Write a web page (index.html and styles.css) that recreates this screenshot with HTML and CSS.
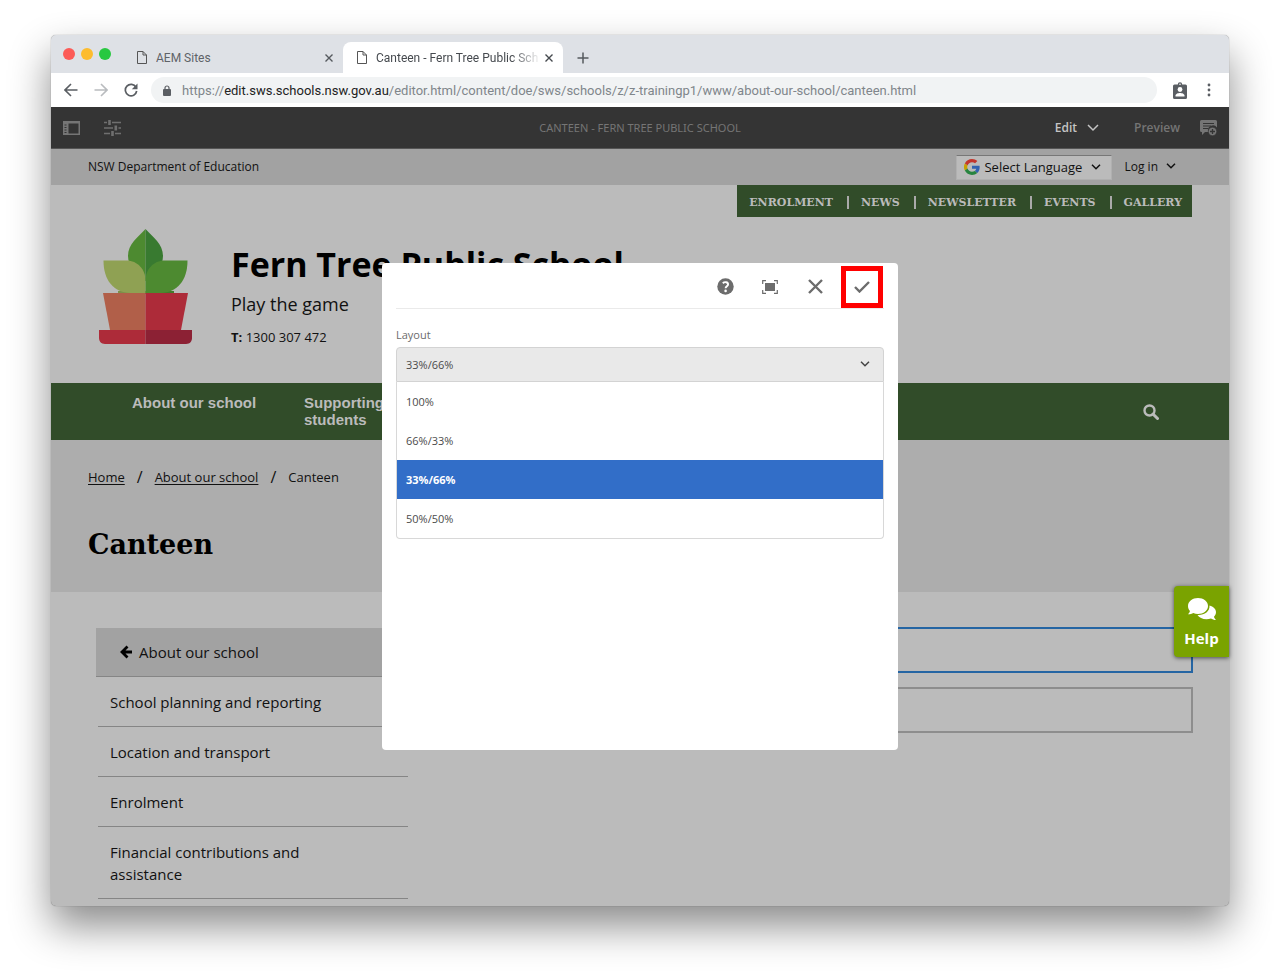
FILE: index.html
```html
<!DOCTYPE html>
<html lang="en">
<head>
<meta charset="utf-8">
<title>Canteen - Fern Tree Public School</title>
<link rel="stylesheet" href="styles.css">
</head>
<body>
<div class="window">
  <header class="tabs">
    <div class="lights"><span class="light red"></span><span class="light amber"></span><span class="light green"></span></div>
    <div class="tab">
      <svg class="doc" viewBox="0 0 10 13" width="10" height="13"><path d="M.5.5H6L9.5 4v8.500H.5zM6 .5V4h3.500" fill="none" stroke="#555" stroke-width="1"/></svg>
      <span class="tab-title">AEM Sites</span>
      <button class="plain" aria-label="Close AEM Sites"><svg viewBox="0 0 8 8" width="8" height="8"><path d="M.5.5l7 7m0-7l-7 7" stroke="#55595e" stroke-width="1.400"/></svg></button>
    </div>
    <div class="tab active">
      <svg class="doc" viewBox="0 0 10 13" width="10" height="13"><path d="M.5.5H6L9.5 4v8.500H.5zM6 .5V4h3.500" fill="none" stroke="#555" stroke-width="1"/></svg>
      <span class="tab-title">Canteen - Fern Tree Public Sch</span>
      <button class="plain" aria-label="Close Canteen"><svg viewBox="0 0 8 8" width="8" height="8"><path d="M.5.5l7 7m0-7l-7 7" stroke="#45494e" stroke-width="1.400"/></svg></button>
    </div>
    <button class="plain new-tab" aria-label="New tab"><svg viewBox="0 0 12 12" width="12" height="12"><path d="M6 .5v11M.5 6h11" stroke="#55595e" stroke-width="1.500"/></svg></button>
  </header>

  <div class="toolbar">
    <button class="plain" aria-label="Back"><svg viewBox="0 0 14 14" width="14" height="14"><path d="M13.500 7H1.500M7 1L1 7l6 6" fill="none" stroke="#5a5e63" stroke-width="1.600"/></svg></button>
    <button class="plain" aria-label="Forward"><svg viewBox="0 0 14 14" width="14" height="14"><path d="M.5 7h12M7 1l6 6-6 6" fill="none" stroke="#b9bcbf" stroke-width="1.600"/></svg></button>
    <button class="plain" aria-label="Reload"><svg viewBox="0 0 14 14" width="14" height="14"><path d="M12 4.200A5.700 5.700 0 1 0 12.700 8" fill="none" stroke="#5a5e63" stroke-width="1.700"/><path d="M13.500.5v5.700H7.800z" fill="#5a5e63"/></svg></button>
    <div class="address">
      <svg viewBox="0 0 8 11" width="8" height="11"><rect y="4" width="8" height="7" rx="1" fill="#5a5e63"/><path d="M2 4.500V3a2 2 0 0 1 4 0v1.500" fill="none" stroke="#5a5e63" stroke-width="1.200"/></svg>
      <span class="url">https://<b>edit.sws.schools.nsw.gov.au</b>/editor.html/content/doe/sws/schools/z/z-trainingp1/www/about-our-school/canteen.html</span>
    </div>
    <button class="plain" aria-label="Profile"><svg viewBox="0 0 14 17" width="14" height="17"><path d="M1.500 2.500h3.300a2.200 2.200 0 0 1 4.400 0h3.300A1.500 1.500 0 0 1 14 4v11.500a1.500 1.500 0 0 1-1.500 1.500h-11A1.500 1.500 0 0 1 0 15.500V4a1.500 1.500 0 0 1 1.500-1.500z" fill="#5a5e63"/><circle cx="7" cy="2.300" r=".8" fill="#fff"/><circle cx="7" cy="7.500" r="2.400" fill="#fff"/><path d="M2.500 14.500v-1c0-1.700 2.800-2.500 4.500-2.500s4.500.8 4.500 2.500v1z" fill="#fff"/></svg></button>
    <button class="plain more" aria-label="Menu"><svg viewBox="0 0 4 14" width="4" height="14"><g fill="#5a5e63"><circle cx="2" cy="2" r="1.400"/><circle cx="2" cy="7" r="1.400"/><circle cx="2" cy="12" r="1.400"/></g></svg></button>
  </div>

  <div class="editor">
    <div class="editor-left">
      <button class="plain" aria-label="Toggle side panel"><svg viewBox="0 0 17 14" width="17" height="14"><path fill-rule="evenodd" d="M0 0h17v14H0zM5.500 2.500v10h10v-10z" fill="#757575"/><path d="M1.500 4h2M1.500 6.500h2M1.500 9h2M1.500 11.500h2" stroke="#343434" stroke-width="1.200"/></svg></button>
      <button class="plain" aria-label="Page information"><svg viewBox="0 0 17 16" width="17" height="16"><path d="M0 2.500h3M8 2.500h9M0 8h9M14.500 8H17M0 13.500h6M11 13.500h6" stroke="#6f6f6f" stroke-width="1.600" fill="none"/><path d="M5.500 0v5M11.800 5.500v5M8.500 11v5" stroke="#6f6f6f" stroke-width="2.600"/></svg></button>
    </div>
    <span class="editor-title">CANTEEN - FERN TREE PUBLIC SCHOOL</span>
    <div class="editor-right">
      <button class="plain mode">Edit <svg viewBox="0 0 12 8" width="12" height="8"><path d="M1 1l5 5 5-5" fill="none" stroke="#c4c4c4" stroke-width="1.500"/></svg></button>
      <button class="plain preview">Preview</button>
      <button class="plain" aria-label="Annotate"><svg viewBox="0 0 17 16" width="17" height="16"><path d="M1.500 0h14A1.500 1.500 0 0 1 17 1.500v6A5 5 0 0 0 8.200 12H5l-3 3v-3h-.5A1.500 1.500 0 0 1 0 10.500v-9A1.500 1.500 0 0 1 1.500 0z" fill="#757575"/><path d="M3 3.500h11M3 6h8M3 8.500h5" stroke="#343434" stroke-width="1.100"/><circle cx="12.500" cy="11.500" r="4.200" fill="#757575" stroke="#343434" stroke-width=".6"/><path d="M12.500 9v5M10 11.500h5" stroke="#343434" stroke-width="1.300"/></svg></button>
    </div>
  </div>

  <main class="site">
    <div class="department">
      <a href="#">NSW Department of Education</a>
      <div class="account">
        <button class="language">
          <svg viewBox="0 0 48 48" width="16" height="16"><path fill="#c3352b" d="M24 9.500c3.500 0 6.700 1.200 9.200 3.600l6.900-6.900C35.900 2.400 30.500 0 24 0 14.600 0 6.500 5.400 2.600 13.200l8 6.200C12.400 13.700 17.700 9.500 24 9.500z"/><path fill="#3262b0" d="M47 24.500c0-1.600-.2-3.100-.4-4.500H24v9h12.900c-.6 3-2.300 5.500-4.800 7.200l7.700 6C44.400 38 47 32 47 24.500z"/><path fill="#c7a000" d="M10.500 28.600a14 14 0 0 1 0-9.200l-8-6.200a24 24 0 0 0 0 21.600z"/><path fill="#27843f" d="M24 48c6.500 0 11.900-2.100 15.900-5.800l-7.700-6c-2.200 1.500-4.900 2.300-8.200 2.300-6.300 0-11.600-4.200-13.500-9.900l-8 6.200C6.500 42.600 14.600 48 24 48z"/></svg>
          Select Language
          <svg class="chev" viewBox="0 0 10 6" width="10" height="6"><path d="M1 .8l4 4 4-4" fill="none" stroke="#111" stroke-width="1.500"/></svg>
        </button>
        <button class="plain login">Log in <svg viewBox="0 0 10 6" width="10" height="6"><path d="M1 .8l4 4 4-4" fill="none" stroke="#111" stroke-width="1.500"/></svg></button>
      </div>
    </div>

    <div class="masthead">
      <nav class="quick"><a href="#">ENROLMENT</a><a href="#">NEWS</a><a href="#">NEWSLETTER</a><a href="#">EVENTS</a><a href="#">GALLERY</a></nav>
      <div class="brand">
        <svg viewBox="0 0 93 116" width="93" height="116">
          <path d="M46.500 0C39 8 29 15 29 27c0 10 8 20 17.500 25z" fill="#4d8a30"/><path d="M46.500 0C54 8 64 15 64 27c0 10-8 20-17.500 25z" fill="#387a30"/>
          <path d="M19 62h28v3H19z" fill="#7d8f49"/><path d="M47 62h28v3H47z" fill="#427a2b"/>
          <path d="M4.500 31.500h23c11 0 19 9 19 20V64H31C15 63 4.500 52 4.500 31.500z" fill="#8fa153"/>
          <path d="M88.500 31.500h-23c-11 0-19 9-19 20V64H62c16-1 26.500-12 26.500-32.500z" fill="#4d8a30"/>
          <path d="M4 64h42.500v37H11z" fill="#b15f49"/><path d="M46.500 64H89l-7 37H46.500z" fill="#ad2b39"/>
          <path d="M0 101h46.500v14H6c-4 0-6-3-6-6z" fill="#ad2b39"/><path d="M46.500 101H93v8c0 3-2 6-6 6H46.500z" fill="#8c2134"/>
        </svg>
        <div class="identity">
          <h1>Fern Tree Public School</h1>
          <p class="motto">Play the game</p>
          <p class="phone"><b>T:</b> 1300 307 472</p>
        </div>
      </div>
    </div>

    <nav class="main-nav">
      <a href="#">About our school</a>
      <a href="#">Supporting students</a>
      <button class="plain search" aria-label="Search"><svg viewBox="0 0 16 16" width="16" height="16"><circle cx="6.500" cy="6.500" r="5" fill="none" stroke="#bbb" stroke-width="2.400"/><path d="M10 10l4.500 4.500" stroke="#bbb" stroke-width="3" stroke-linecap="round"/></svg></button>
    </nav>

    <section class="page-head">
      <nav class="crumbs"><a href="#">Home</a><span class="slash">/</span><a href="#">About our school</a><span class="slash">/</span><span>Canteen</span></nav>
      <h2>Canteen</h2>
    </section>

    <div class="content">
      <nav class="side">
        <a class="parent" href="#"><svg viewBox="0 0 13 14" width="13" height="14"><path d="M7.500 1.500L2 7l5.500 5.500M2.500 7H12" fill="none" stroke="#000" stroke-width="2.800"/></svg>About our school</a>
        <a href="#">School planning and reporting</a>
        <a href="#">Location and transport</a>
        <a href="#">Enrolment</a>
        <a href="#">Financial contributions and assistance</a>
      </nav>
      <div class="slots"><div class="slot selected"></div><div class="slot"></div></div>
    </div>
  </main>

  <button class="help">
    <svg viewBox="0 0 28 22" width="28" height="22"><path d="M21.500 7.500c3.800 1 6.500 3.500 6.500 6.500 0 2-1 3.500-2 4.700.3 1.500 1 2.300 2 3.300-2 0-3.800-.6-5-1.500-1.400.5-3 .8-4.500.8-4 0-7.500-1.800-9-4.300 6.500.5 12.500-3.500 12-9.500z" fill="#fff"/><path d="M10 0c5.500 0 10 3.500 10 8s-4.500 8-10 8c-1.700 0-3.300-.3-4.700-.9C4 16 2.200 16.300 0 16.300c1-1 1.700-2 2-3.300-1.300-1.400-2-3-2-5 0-4.500 4.500-8 10-8z" fill="#fff"/></svg>
    Help
  </button>

  <section class="dialog" role="dialog" aria-label="Layout settings">
    <div class="dialog-bar">
      <button class="plain" aria-label="Help"><svg viewBox="0 0 17 17" width="17" height="17"><circle cx="8.500" cy="8.500" r="8.200" fill="#6c6c6c"/><path d="M5.800 5.200c1.800-1.700 5.300-1.300 5.300 1.100 0 2-2.500 1.900-2.500 4" fill="none" stroke="#fff" stroke-width="1.900"/><circle cx="8.600" cy="12.900" r="1.300" fill="#fff"/></svg></button>
      <button class="plain" aria-label="Full screen"><svg viewBox="0 0 16 14" width="16" height="14"><rect x="3" y="3" width="10" height="8" fill="#6c6c6c"/><path d="M.7 4V.7H4M12 .7h3.300V4M15.300 10v3.300H12M4 13.300H.7V10" fill="none" stroke="#6c6c6c" stroke-width="1.200"/></svg></button>
      <button class="plain cancel" aria-label="Cancel"><svg viewBox="0 0 15 15" width="15" height="15"><path d="M1 1l13 13M14 1L1 14" stroke="#6c6c6c" stroke-width="2.400"/></svg></button>
      <button class="plain done" aria-label="Done"><svg viewBox="0 0 16 12" width="16" height="12"><path d="M1 6l4.500 4.500L15 1" fill="none" stroke="#6c6c6c" stroke-width="2.400"/></svg></button>
    </div>
    <label for="layout">Layout</label>
    <div class="picker">
      <select id="layout"><option>100%</option><option>66%/33%</option><option selected>33%/66%</option><option>50%/50%</option></select>
      <svg class="picker-arrow" viewBox="0 0 10 6" width="10" height="6"><path d="M1 .8l4 4 4-4" fill="none" stroke="#444" stroke-width="1.500"/></svg>
    </div>
    <ul class="options" role="listbox" aria-label="Layout">
      <li role="option">100%</li><li role="option">66%/33%</li><li role="option" aria-selected="true" class="chosen">33%/66%</li><li role="option">50%/50%</li>
    </ul>
  </section>
</div>
</body>
</html>
```
FILE: styles.css
```css
* { box-sizing: border-box; }
body { margin: 0; padding: 35px 51px 67px; background: #fff; font-family: "Open Sans", sans-serif; color: #111; overflow-x: hidden; }
a { color: inherit; text-decoration: none; }
h1, h2, p, ul { margin: 0; padding: 0; }
svg { display: block; flex: none; }
button { font: inherit; color: inherit; cursor: pointer; }
.plain { display: flex; align-items: center; justify-content: center; padding: 0; border: 0; background: none; white-space: nowrap; }

.window { position: relative; border-radius: 5px; background: #bbb; box-shadow: 0 0 1px rgba(0,0,0,.5), 0 20px 40px rgba(0,0,0,.46); }

/* Browser frame */
.tabs { display: flex; align-items: flex-end; height: 38px; border-radius: 5px 5px 0 0; background: #dee1e6; font: 12px Roboto, sans-serif; color: #5f6368; }
.lights { display: flex; gap: 6px; width: 72px; padding-left: 12px; height: 25px; }
.light { width: 12px; height: 12px; border-radius: 50%; }
.red { background: #fc5b57; }
.amber { background: #fdbc2e; }
.green { background: #28c840; }
.tab { display: flex; align-items: center; width: 220px; height: 31px; padding: 0 10px 0 14px; border-radius: 8px 8px 0 0; }
.tab.active { background: #fff; color: #45494e; }
.tab-title { flex: 1; margin: 0 4px 0 9px; overflow: hidden; white-space: nowrap; }
.active .tab-title { -webkit-mask-image: linear-gradient(90deg, #000 82%, transparent); mask-image: linear-gradient(90deg, #000 82%, transparent); }
.new-tab { width: 40px; height: 31px; }
.toolbar { display: flex; align-items: center; gap: 16px; height: 34px; padding: 0 18px 0 13px; background: #fff; }
.more { margin-left: 4px; }
.address { display: flex; flex: 1; align-items: center; gap: 11px; height: 26px; margin-left: -3px; padding: 0 12px; border-radius: 13px; background: #f1f3f4; }
.url { font: 13px Roboto, sans-serif; color: #80868b; white-space: nowrap; }
.url b { font-weight: 400; color: #222; }

/* Authoring bar */
.editor { display: grid; grid-template-columns: 1fr auto 1fr; align-items: center; height: 42px; padding: 0 12px; background: #343434; border-bottom: 1px solid #555; color: #757575; font-size: 12px; }
.editor-left { display: flex; gap: 24px; }
.editor-right { display: flex; justify-content: flex-end; align-items: center; gap: 20px; font-weight: 600; }
.editor-title { font-family: "Noto Sans", sans-serif; font-size: 11px; }
.mode { gap: 10px; margin-right: 15px; color: #c4c4c4; }

/* School site */
.department { display: flex; align-items: center; justify-content: space-between; height: 36px; padding: 0 53px 2px 37px; background: #a2a2a2; font-size: 12px; }
.account { display: flex; align-items: center; gap: 12px; }
.login { gap: 8px; }
.language { display: flex; align-items: center; gap: 4px; width: 156px; height: 25px; margin-top: 2px; padding: 0 10px 0 7px; border: 1px solid #b0b0b0; border-top-color: #777; background: #bbb; font-size: 13px; white-space: nowrap; }
.chev { margin-left: auto; }
.masthead { display: flex; flex-direction: column; height: 198px; background: #bbb; }
.quick { display: flex; align-items: center; align-self: flex-end; height: 32px; margin-right: 37px; padding-top: 2px; background: #314c29; color: #bbb; font: bold 11px "DejaVu Serif", serif; }
.quick a { padding: 0 14px 0 12px; }
.quick a:last-child { padding-right: 10px; }
.quick a + a { border-left: 2px solid #aaa; }
.brand { display: flex; gap: 39px; padding: 12px 48px 0; }
.identity { padding-top: 12px; }
h1 { color: #000; font-size: 34px; line-height: 46px; white-space: nowrap; }
.motto { margin-top: 5px; font-size: 18px; line-height: 24px; }
.phone { margin-top: 11px; font-size: 13px; line-height: 20px; }
.main-nav { display: flex; align-items: flex-start; gap: 42px; height: 57px; padding: 11px 70px 0 81px; background: #314c29; color: #bbb; font: bold 15px/17px "Liberation Sans", sans-serif; }
.main-nav a { width: 130px; }
.search { margin: 10px 0 0 auto; }
.page-head { height: 152px; padding: 26px 37px 0; background: #adadad; }
.crumbs { display: flex; align-items: center; gap: 12px; font-size: 13px; line-height: 22px; }
.crumbs a { text-decoration: underline; text-underline-offset: 2px; }
.slash { font-size: 16px; }
h2 { margin-top: 37px; color: #000; font: bold 27px/40px "DejaVu Serif", serif; }
.content { display: grid; grid-template-columns: 312px 1fr; gap: 30px; min-height: 314px; padding: 35px 36px 7px 45px; }
.side { display: flex; flex-direction: column; padding-top: 1px; font-size: 15px; line-height: 22px; }
.side a { margin-left: 2px; padding: 14px 40px 13px 12px; border-bottom: 1px solid #858585; }
.side .parent { display: flex; align-items: center; gap: 6px; margin-left: 0; padding: 13px 24px; background: #a2a2a2; }
.slots { display: flex; flex-direction: column; gap: 14px; }
.slot { height: 46px; border: 2px solid #8d8d8d; }
.slot.selected { border-color: #2565a3; }
.help { position: absolute; top: 551px; right: 0; display: flex; flex-direction: column; align-items: center; gap: 6px; width: 55px; padding: 12px 0 7px; border: 0; border-radius: 4px 0 0 4px; background: #7aa300; box-shadow: 0 1px 4px rgba(0,0,0,.6); color: #fff; font-weight: 700; font-size: 15px; line-height: 24px; }

/* Component dialog */
.dialog { position: absolute; top: 228px; left: 50%; width: 516px; min-height: 487px; margin-left: -258px; padding: 0 14px; border-radius: 4px; background: #fff; color: #4b4b4b; font-size: 11px; }
.dialog-bar { display: flex; align-items: center; justify-content: flex-end; gap: 28px; height: 46px; padding: 2px 1px 0 0; border-bottom: 1px solid #eaeaea; }
.cancel { margin-left: 2px; }
.done { width: 42px; height: 42px; margin-left: -10px; border: 5px solid #f00; }
.dialog label { display: block; margin-top: 18px; line-height: 16px; color: #6c6c6c; }
.picker { position: relative; margin-top: 4px; }
.picker select { display: block; width: 100%; height: 35px; padding: 0 9px; border: 1px solid #d3d3d3; border-radius: 4px 4px 0 0; background: #e9e9e9; color: #4b4b4b; font: inherit; appearance: none; }
.picker-arrow { position: absolute; top: 14px; right: 14px; pointer-events: none; }
.options { border: 1px solid #d8d8d8; border-top: 0; border-radius: 0 0 4px 4px; list-style: none; }
.options li { height: 39px; padding: 0 9px; line-height: 39px; }
.options .chosen { background: #326ec8; color: #fff; font-weight: 700; }
```
